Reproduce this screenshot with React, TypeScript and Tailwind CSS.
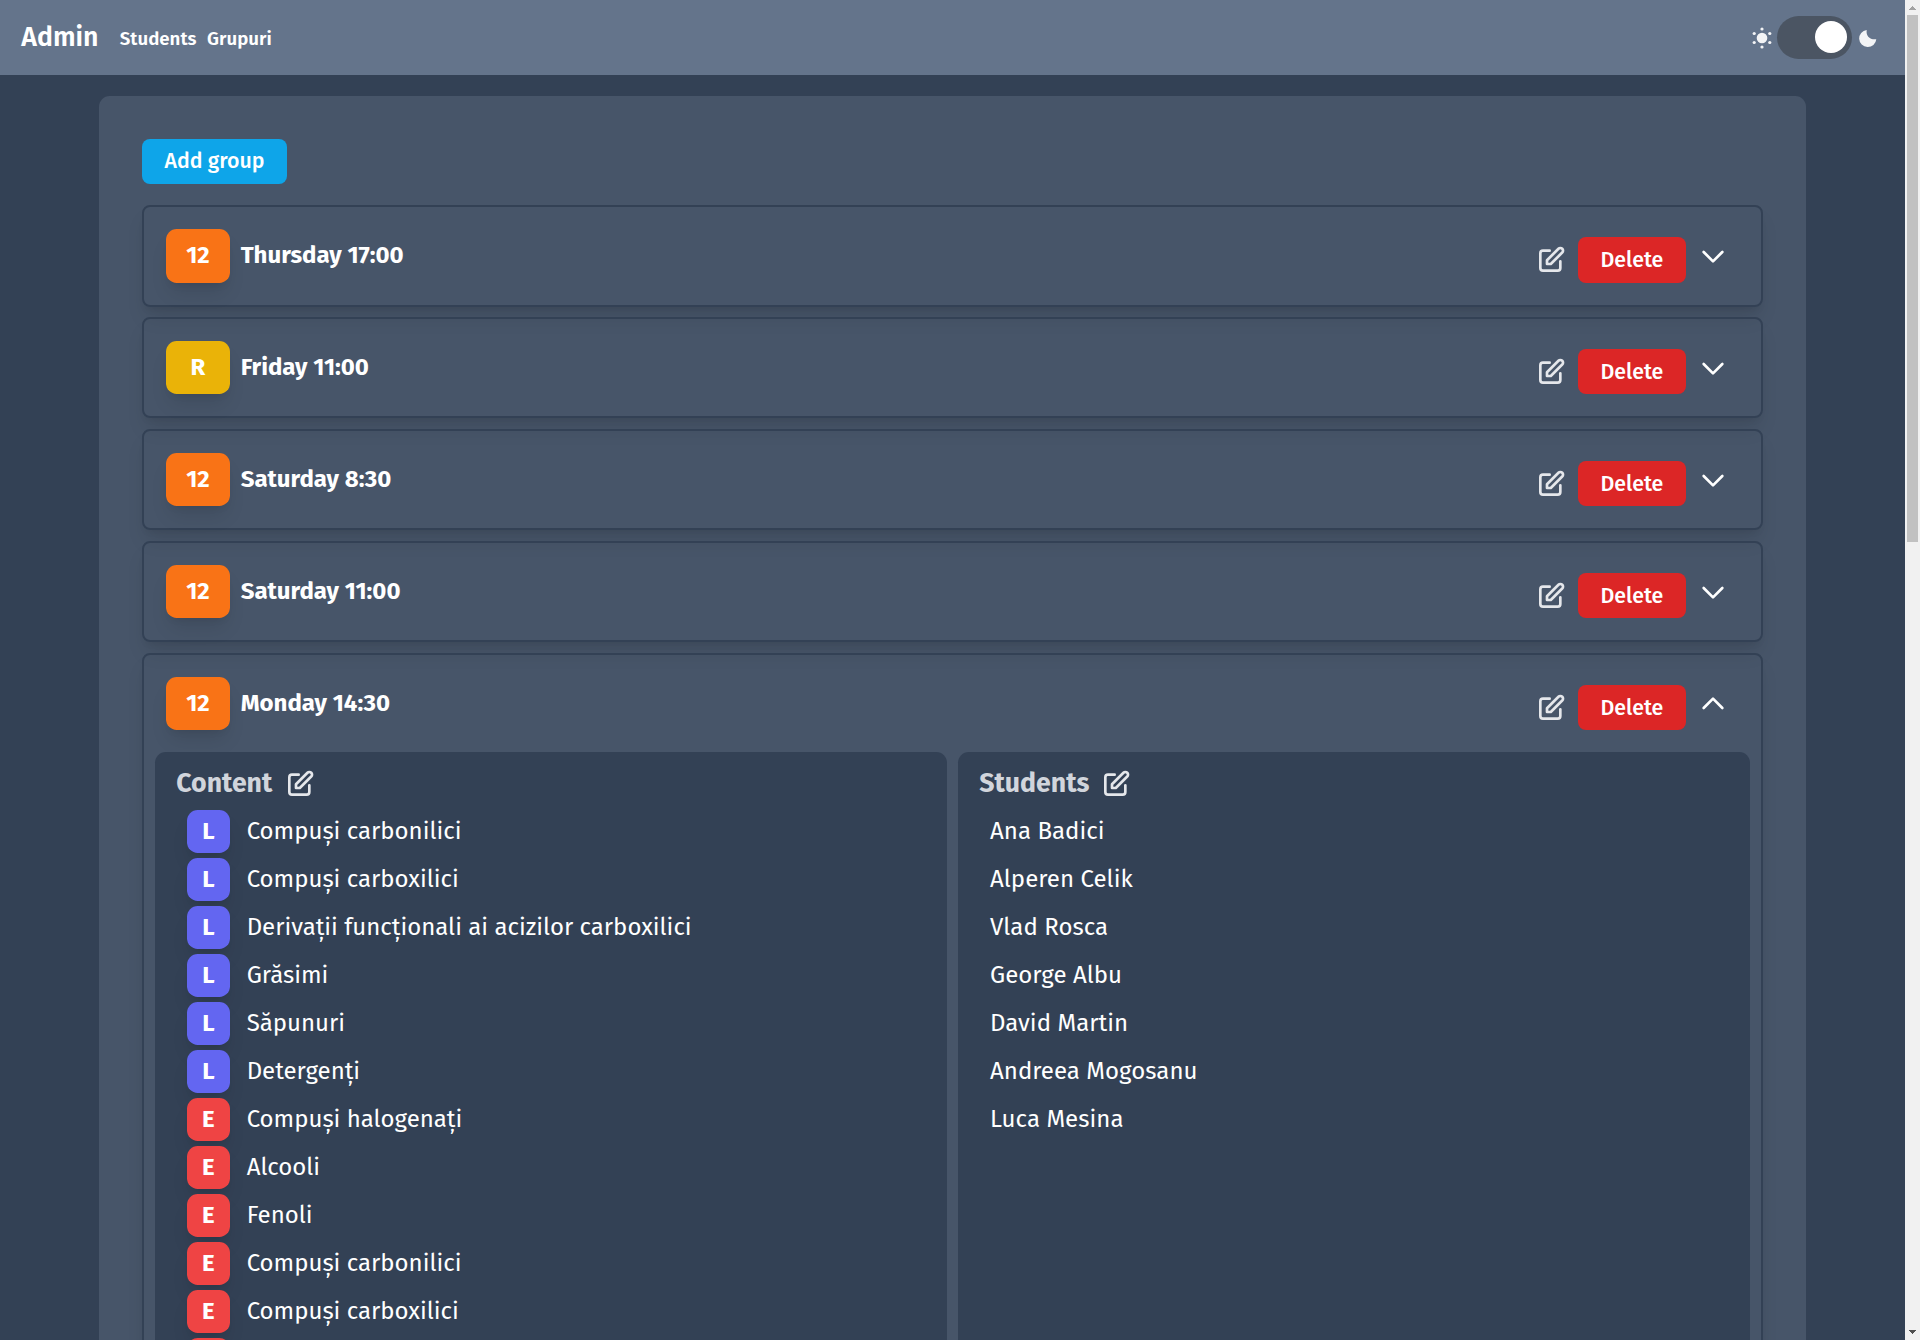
type Group = { badge: string; title: string; open?: boolean };

const groups: Group[] = [
  { badge: '12', title: 'Thursday 17:00' },
  { badge: 'R', title: 'Friday 11:00' },
  { badge: '12', title: 'Saturday 8:30' },
  { badge: '12', title: 'Saturday 11:00' },
  { badge: '12', title: 'Monday 14:30', open: true },
];

const content: [string, string][] = [
  ['L', 'Compuși carbonilici'],
  ['L', 'Compuși carboxilici'],
  ['L', 'Derivații funcționali ai acizilor carboxilici'],
  ['L', 'Grăsimi'],
  ['L', 'Săpunuri'],
  ['L', 'Detergenți'],
  ['E', 'Compuși halogenați'],
  ['E', 'Alcooli'],
  ['E', 'Fenoli'],
  ['E', 'Compuși carbonilici'],
  ['E', 'Compuși carboxilici'],
  ['', ''],
];

const students = [
  'Ana Badici',
  'Alperen Celik',
  'Vlad Rosca',
  'George Albu',
  'David Martin',
  'Andreea Mogosanu',
  'Luca Mesina',
];

function StrokeIcon({ d, className }: { d: string; className: string }) {
  return (
    <svg viewBox="0 0 24 24" fill="none" stroke="currentColor" strokeWidth={2} strokeLinecap="round" strokeLinejoin="round" className={`size-8 shrink-0 ${className}`}>
      <path d={d} />
    </svg>
  );
}

const editPath =
  'M11 5H6a2 2 0 00-2 2v11a2 2 0 002 2h11a2 2 0 002-2v-5m-1.414-9.414a2 2 0 112.828 2.828L11.828 15H9v-2.828l8.586-8.586z';

function SunIcon() {
  const dots = [0, 60, 120, 180, 240, 300].map((deg) => {
    const a = (deg * Math.PI) / 180;
    return { x: 11 + Math.sin(a) * 9, y: 11 - Math.cos(a) * 9 };
  });
  return (
    <svg viewBox="0 0 22 22" className="mt-[26.5px] size-[22px] text-gray-100" fill="currentColor">
      <circle cx="11" cy="11" r="5.3" />
      {dots.map((p, i) => (
        <circle key={i} cx={p.x} cy={p.y} r="1.6" />
      ))}
    </svg>
  );
}

function MoonIcon() {
  return (
    <svg viewBox="0 0 22 22" className="ml-[5px] mt-[26.5px] size-[22px] text-gray-100" fill="currentColor">
      <path d="M9.7 2.9C8.8 8.6 12.4 12.9 19.3 12.3A8.6 8.6 0 1 1 9.7 2.9z" />
    </svg>
  );
}

function Header() {
  return (
    <header className="flex h-[75px] items-start bg-[#64748b] pl-[21.33px] pr-[26px] font-semibold">
      <span className="mt-[19px] text-[26.67px] leading-[36px]">Admin</span>
      <nav className="ml-[21.33px] mt-[25px] flex gap-[10.67px] text-[18.67px] leading-[28px]">
        <a>Students</a>
        <a>Grupuri</a>
      </nav>
      <div className="ml-auto flex items-start">
        <SunIcon />
        <div className="ml-[4.5px] mt-4 flex h-[43px] w-[75px] items-start justify-end rounded-full bg-[#4b5563] pr-[5px] pt-[5px]">
          <div className="size-8 rounded-full bg-white" />
        </div>
        <MoonIcon />
      </div>
    </header>
  );
}

function GroupCard({ group, first }: { group: Group; first: boolean }) {
  return (
    <section
      className={`rounded-[8px] border-2 border-[#334155] shadow-[0_13.3px_20px_-4px_rgba(0,0,0,0.1),0_5.3px_8px_-5.3px_rgba(0,0,0,0.1)] ${
        group.open ? 'h-[1200px]' : first ? 'mb-[10px] h-[102px]' : 'mb-[11px] h-[101px]'
      }`}
    >
      <div className={`flex items-start pl-[22px] pr-[31.67px] pt-[22px] ${first ? 'h-[98px]' : 'h-[97px]'}`}>
        <div
          className={`w-[64px] rounded-[10.67px] text-center text-[24px] font-bold leading-[52px] shadow-[0_13.3px_20px_-4px_rgba(0,0,0,0.1),0_5.3px_8px_-5.3px_rgba(0,0,0,0.1)] ${
            first ? 'h-[54px]' : 'h-[53px]'
          } ${group.badge === 'R' ? 'bg-[#eab308]' : 'bg-[#f97316]'}`}
        >
          {group.badge}
        </div>
        <h2 className="ml-[10.67px] text-[24px] font-bold leading-[52px]">{group.title}</h2>
        <div className="ml-auto flex items-start gap-[11px]">
          <StrokeIcon d={editPath} className="mt-[14.67px] text-gray-200" />
          <button
            className={`mt-[8px] flex w-[108px] items-start justify-center rounded-[8px] bg-[#dc2626] pr-px text-[21.33px] font-medium leading-[46px] ${
              first ? 'h-[46px]' : 'h-[45px]'
            }`}
          >
            Delete
          </button>
          <StrokeIcon d={group.open ? 'M5 15l7-7 7 7' : 'M19 9l-7 7-7-7'} className="mt-[11px] text-white" />
        </div>
      </div>
      {group.open && (
        <div className="flex h-[1080px] gap-[11px] px-[11px]">
          <div className="flex-1 rounded-[10.67px] bg-[#334155] px-[21.33px]">
            <PanelTitle gap="gap-[11.5px]">Content</PanelTitle>
            <ul className="pl-[10.67px]">
              {content.map(([kind, name], i) => (
                <li key={i} className="flex h-12 items-start text-[24px]">
                  <span
                    className={`mt-[2px] h-[43px] w-[42.67px] rounded-[10.67px] text-center font-bold leading-[42px] shadow-[0_13.3px_20px_-4px_rgba(0,0,0,0.1),0_5.3px_8px_-5.3px_rgba(0,0,0,0.1)] ${
                      kind === 'L' ? 'bg-[#6366f1]' : 'bg-[#ef4444]'
                    }`}
                  >
                    {kind}
                  </span>
                  <span className="ml-[17px] leading-[46px]">{name}</span>
                </li>
              ))}
            </ul>
          </div>
          <div className="flex-1 rounded-[10.67px] bg-[#334155] px-[21.33px]">
            <PanelTitle gap="gap-[11px]">Students</PanelTitle>
            <ul className="pl-[10.67px]">
              {students.map((name) => (
                <li key={name} className="h-12 text-[24px] leading-[46px] tracking-[0.04px]">
                  {name}
                </li>
              ))}
            </ul>
          </div>
        </div>
      )}
    </section>
  );
}

function PanelTitle({ children, gap }: { children: string; gap: string }) {
  return (
    <div className={`flex h-[56px] items-start pt-[13px] ${gap}`}>
      <h3 className="text-[26.67px] font-bold leading-[36px] text-gray-300">{children}</h3>
      <StrokeIcon d={editPath} className="mt-[3px] text-gray-200" />
    </div>
  );
}

function Scrollbar() {
  return (
    <div className="flex h-[1340px] w-[15px] flex-col items-center bg-[#f1f1f1]">
      <svg viewBox="0 0 15 15" className="size-[15px] shrink-0" shapeRendering="crispEdges">
        <path d="M4 10h7v-1h-1v-1h-1v-1h-1v-1h-1v1h-1v1h-1v1h-1z" fill="#a3a3a3" />
      </svg>
      <div className="h-[527px] w-[11px] bg-[#c1c1c1]" />
      <svg viewBox="0 0 15 15" className="mt-auto size-[15px] shrink-0" shapeRendering="crispEdges">
        <path d="M4 5h7v1h-1v1h-1v1h-1v1h-1v-1h-1v-1h-1v-1h-1z" fill="#505050" />
      </svg>
    </div>
  );
}

export default function App() {
  return (
    <div className="flex h-[1340px] w-[1920px] overflow-hidden bg-[#334155] font-['Fira_Sans','Noto_Sans',sans-serif] text-white">
      <div className="w-[1905px]">
        <Header />
        <main className="ml-[99px] mt-[21px] w-[1707px] rounded-[10.67px] bg-[#475569] px-[43px] pt-[43px]">
          <button className="mb-[21px] flex h-[45px] w-[145px] items-start justify-center rounded-[8px] bg-[#0ea5e9] text-[21.33px] font-medium leading-[44px]">
            Add group
          </button>
          {groups.map((g, i) => (
            <GroupCard key={g.title} group={g} first={i === 0} />
          ))}
        </main>
      </div>
      <Scrollbar />
    </div>
  );
}
